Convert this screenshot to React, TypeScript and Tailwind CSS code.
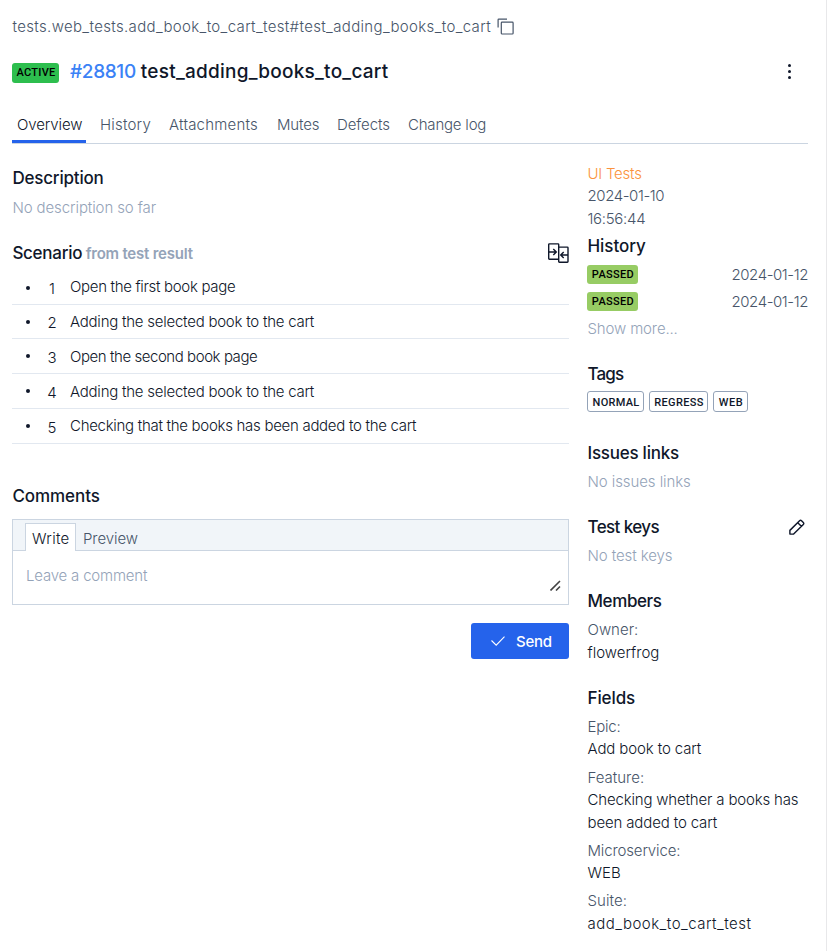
const body = "text-[15px] font-light leading-5 whitespace-nowrap";
const heading = "text-[17px] font-medium leading-5 whitespace-nowrap text-[#0f172a]";
const badge = "flex items-center justify-center rounded-[3px] font-[Roboto,sans-serif] text-[11px] font-medium";

const steps = [
  { text: "Open the first book page", row: "h-[34px]", num: "pt-[2px]", label: "-mt-[2px] tracking-[-0.32px]" },
  { text: "Adding the selected book to the cart", row: "h-[34px]", num: "pt-[2px]", label: "tracking-[-0.24px]" },
  { text: "Open the second book page", row: "h-[35px]", num: "pt-[3px]", label: "mt-[2px] tracking-[-0.44px]" },
  { text: "Adding the selected book to the cart", row: "h-[35px]", num: "pt-[3px]", label: "mt-[2px] tracking-[-0.24px]" },
  { text: "Checking that the books has been added to the cart", row: "h-[35px]", num: "pt-[4px]", label: "tracking-[-0.29px]" },
];

const tabs = [
  { label: "Overview", cls: "w-[74px] mr-[9px] tracking-[-0.1px] text-[#0f172a] border-[#2563eb]" },
  { label: "History", cls: "w-[69px] tracking-[0.2px] text-[#475569] border-transparent" },
  { label: "Attachments", cls: "w-[108px] tracking-[0.2px] text-[#475569] border-transparent" },
  { label: "Mutes", cls: "w-[60px] tracking-[-0.15px] text-[#475569] border-transparent" },
  { label: "Defects", cls: "w-[71px] tracking-[-0.08px] text-[#475569] border-transparent" },
  { label: "Change log", cls: "w-[90px] tracking-[-0.2px] text-[#475569] border-transparent" },
];

const fields = [
  { name: "Epic:", nameCls: "mt-[9px] tracking-[-0.2px]", values: [{ text: "Add book to cart", cls: "mt-[2px] tracking-[-0.12px]" }] },
  {
    name: "Feature:",
    nameCls: "mt-[9px]",
    values: [
      { text: "Checking whether a books has", cls: "mt-[2px] tracking-[-0.17px]" },
      { text: "been added to cart", cls: "mt-[3px] tracking-[-0.14px]" },
    ],
  },
  { name: "Microservice:", nameCls: "mt-2 tracking-[-0.14px]", values: [{ text: "WEB", cls: "mt-[2px] tracking-[0.1px]" }] },
  { name: "Suite:", nameCls: "mt-2 tracking-[0.1px]", values: [{ text: "add_book_to_cart_test", cls: "mt-[3px] tracking-[0.48px]" }] },
];

function CopyIcon() {
  return (
    <svg className="ml-[5.5px] h-[18px] w-[18px]" viewBox="0 0 18 18" fill="none" stroke="#475569" strokeWidth="1.2">
      <path d="M1.1 9.5V1.8q0-.7.7-.7H10" />
      <rect x="4.3" y="4.2" width="11.8" height="11.8" rx=".8" />
    </svg>
  );
}

function CompareIcon() {
  return (
    <svg className="h-[20px] w-[21px]" viewBox="0 0 21 20" fill="none" stroke="#0f172a" strokeWidth="1.4">
      <path d="M10.7 16.3H1.4q-.7 0-.7-.7V1.6q0-.7.7-.7h8.6q.7 0 .7.7v17q0 .7.7.7h7.9q.7 0 .7-.7V4.8q0-.7-.7-.7h-8.6" />
      <path d="M1 9h7M5.3 6l3 3-3 3M20 12h-7M15.7 9l-3 3 3 3" />
    </svg>
  );
}

function PencilIcon() {
  return (
    <svg className="h-4 w-4" viewBox="0 0 18 18" fill="none" stroke="#0f172a" strokeWidth="1.6" strokeLinejoin="round">
      <path d="M1 17v-4.2L11.9 1.9q1.1-1.1 2.2 0l2 2q1.1 1.1 0 2.2L5.2 17zM9.8 4.1l4.1 4.1" />
    </svg>
  );
}

function Tag({ children, cls }: { children: string; cls: string }) {
  return (
    <div className={`${badge} h-[21px] border border-[#94a3b8] pt-[3px] text-[#0f172a] ${cls}`}>
      {children}
    </div>
  );
}

function Passed({ cls }: { cls: string }) {
  return (
    <div className={`flex h-[19px] items-center justify-between ${cls}`}>
      <div className={`${badge} h-[19px] w-[51px] bg-[#97cc64] pl-px pt-px tracking-[0.35px] text-black`}>
        PASSED
      </div>
      <div className={`${body} tracking-[-0.42px] text-[#475569]`}>2024-01-12</div>
    </div>
  );
}

export default function App() {
  return (
    <div className="h-[951px] w-[827px] overflow-hidden border-r border-[#e8e8ea] bg-white pl-3 pr-[18px] font-[Inter,sans-serif]">
      <div className="mt-[18px] flex h-[18px] items-center text-[#475569]">
        <div className={`${body} pl-[0.5px] tracking-[0.345px]`}>tests.web_tests.add_book_to_cart_test#test_adding_books_to_cart</div>
        <CopyIcon />
      </div>
      <div className="mt-6 flex h-6 items-center">
        <div className={`${badge} mt-[1px] h-5 w-[47px] bg-[#2dbe4e] pl-px pt-[2px] tracking-[0.3px] text-black`}>ACTIVE</div>
        <div className="ml-[11px] whitespace-nowrap text-[19px] font-medium leading-6 tracking-[-0.35px] text-[#3b82f6]">#28810</div>
        <div className="ml-[5px] whitespace-nowrap text-[19px] font-medium leading-6 tracking-[0.24px] text-[#0f172a]">test_adding_books_to_cart</div>
        <div className="-mt-[2px] ml-auto mr-[17px] flex flex-col gap-[3px]">
          <i className="size-[3px] rounded-full bg-[#0f172a]" />
          <i className="size-[3px] rounded-full bg-[#0f172a]" />
          <i className="size-[3px] rounded-full bg-[#0f172a]" />
        </div>
      </div>
      <div className="mt-[31px] flex border-b border-[#cbd5e1]">
        {tabs.map((t) => (
          <div key={t.label} className={`${body} h-7 border-b-3 pl-[5px] ${t.cls}`}>{t.label}</div>
        ))}
      </div>
      <div className="flex">
        <div className="w-[557px]">
          <div className={`${heading} mt-6 pl-[0.4px] tracking-[-0.2px]`}>Description</div>
          <div className={`${body} mt-[10px] pl-[0.4px] tracking-[-0.1px] text-[#94a3b8]`}>No description so far</div>
          <div className="mt-[25px] flex h-5 items-center">
            <div className={`${heading} pl-[0.4px] tracking-[-0.28px]`}>Scenario</div>
            <div className="ml-[3.5px] whitespace-nowrap pt-px text-[15px] font-semibold leading-5 tracking-[-0.22px] text-[#94a3b8]">from test result</div>
            <div className="ml-auto"><CompareIcon /></div>
          </div>
          <div className="mt-2">
            {steps.map((s, i) => (
              <div key={i} className={`flex items-center border-b border-[#e2e8f0] text-[#0f172a] ${s.row}`}>
                <i className="ml-[14px] size-1 rounded-full bg-[#0f172a]" />
                <div className={`${body} ml-4 w-3 text-center ${s.num}`}>{i + 1}</div>
                <div className={`${body} ml-3 ${s.label}`}>{s.text}</div>
              </div>
            ))}
          </div>
          <div className={`${heading} mt-[42px] pl-[0.4px] tracking-[-0.05px]`}>Comments</div>
          <div className="mt-[13px] h-[86px] border border-[#cbd5e1]">
            <div className="flex h-[31px] items-end border-b border-[#cbd5e1] bg-[#f1f5f9] pl-3">
              <div className={`${body} -mb-px h-[28px] w-[51px] border border-b-0 border-[#cbd5e1] bg-white pl-[6px] pt-[5px] tracking-[0.3px] text-[#0f172a]`}>Write</div>
              <div className={`${body} mb-px ml-[7px] tracking-[-0.08px] text-[#475569]`}>Preview</div>
            </div>
            <div className="flex h-[53px] justify-between pl-[13px]">
              <div className={`${body} mt-[15px] tracking-[-0.2px] text-[#94a3b8]`}>Leave a comment</div>
              <svg className="mr-[7px] mt-[29px] h-[11px] w-[11px]" viewBox="0 0 11 11" stroke="#444" strokeWidth="1.6"><path d="M.5 10.5l9.5-9.5M6 10.5l4-4" /></svg>
            </div>
          </div>
          <div className="ml-auto mt-[18px] flex h-9 w-[98px] items-center rounded-[3px] bg-[#2563eb] text-white">
            <svg className="ml-5 h-[10px] w-[14px]" viewBox="0 0 14 10" fill="none" stroke="white" strokeWidth="1.1"><path d="M.5 4.5l4.7 4.7L13.5.7" /></svg>
            <div className="ml-[11px] pt-[2px] text-[15px] font-medium leading-5 tracking-[-0.25px]">Send</div>
          </div>
        </div>
        <div className="ml-[18px] w-[221px]">
          <div className="pl-[0.5px]">
            <div className={`${body} mt-5 tracking-[-0.24px] text-[#fb923c]`}>UI Tests</div>
            <div className={`${body} mt-[2px] tracking-[-0.42px] text-[#475569]`}>2024-01-10</div>
            <div className={`${body} mt-[3px] tracking-[-0.3px] text-[#475569]`}>16:56:44</div>
            <div className={`${heading} mt-[7px] tracking-[-0.05px]`}>History</div>
          </div>
          <Passed cls="mt-[9px]" />
          <Passed cls="mt-2" />
          <div className={`${body} mt-2 pl-[0.5px] tracking-[-0.14px] text-[#94a3b8]`}>Show more...</div>
          <div className={`${heading} mt-[25px] pl-[0.5px] tracking-[-0.85px]`}>Tags</div>
          <div className="mt-[7px] flex gap-[5px]">
            <Tag cls="w-[57px] pl-px tracking-[0.25px]">NORMAL</Tag>
            <Tag cls="w-[59px] pl-px tracking-[0.35px]">REGRESS</Tag>
            <Tag cls="w-[35px] pl-px tracking-[0.5px]">WEB</Tag>
          </div>
          <div className="pl-[0.5px]">
            <div className={`${heading} mt-[31px] tracking-[-0.25px]`}>Issues links</div>
            <div className={`${body} mt-[9px] tracking-[-0.08px] text-[#94a3b8]`}>No issues links</div>
            <div className="mt-[25px] flex h-5 items-center justify-between pr-[3px]">
              <div className={`${heading} tracking-[-0.6px]`}>Test keys</div>
              <PencilIcon />
            </div>
            <div className={`${body} mt-[9px] tracking-[-0.1px] text-[#94a3b8]`}>No test keys</div>
            <div className={`${heading} mt-[25px] tracking-[-0.4px]`}>Members</div>
            <div className={`${body} mt-[9px] text-[#475569]`}>Owner:</div>
            <div className={`${body} mt-[3px] text-[#0f172a]`}>flowerfrog</div>
            <div className={`${heading} mt-[25px] tracking-[-0.1px]`}>Fields</div>
            {fields.map((f) => (
              <div key={f.name} className="flow-root">
                <div className={`${body} text-[#475569] ${f.nameCls}`}>{f.name}</div>
                {f.values.map((v) => (
                  <div key={v.text} className={`${body} text-[#0f172a] ${v.cls}`}>{v.text}</div>
                ))}
              </div>
            ))}
          </div>
        </div>
      </div>
    </div>
  );
}
